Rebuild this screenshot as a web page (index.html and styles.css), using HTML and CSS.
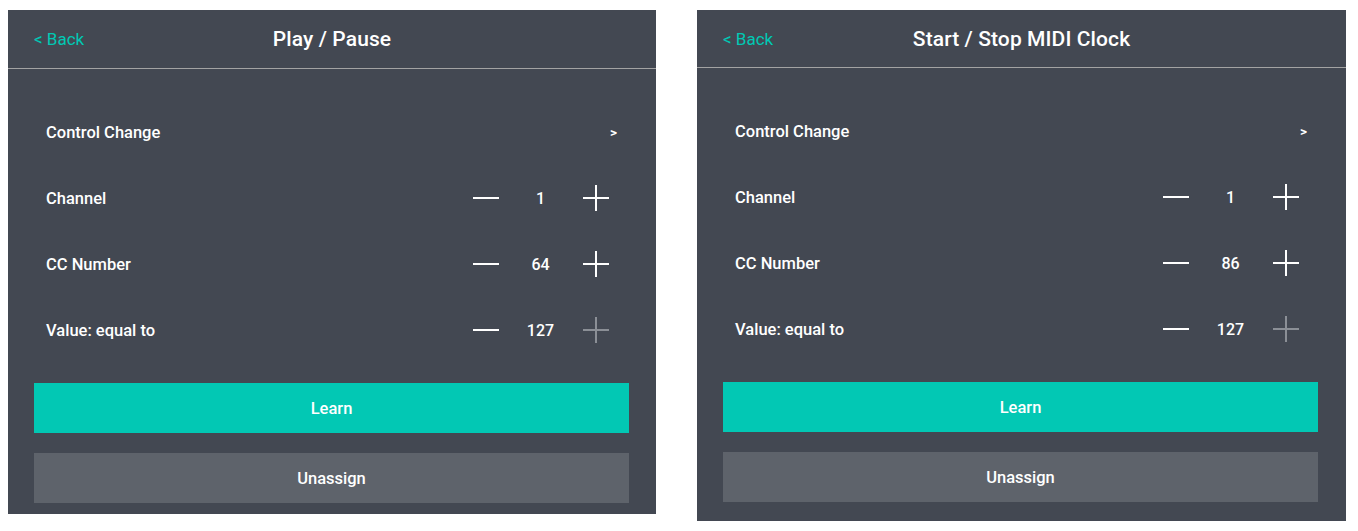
FILE: index.html
```html
<!DOCTYPE html>
<html>
<head>
<meta charset="utf-8">
<link rel="stylesheet" href="styles.css">
</head>
<body>
<div class="page">
  <section class="panel">
    <header class="header">
      <span class="back">&lt; Back</span>
      <h1 class="title">Play / Pause</h1>
    </header>
    <div class="rows">
      <div class="row"><span class="label">Control Change</span><span class="chev">&gt;</span></div>
      <div class="row"><span class="label">Channel</span>
        <div class="stepper">
          <svg class="btn" width="26" height="26" viewBox="0 0 26 26"><rect x="0" y="12" width="26" height="2" fill="#fff"/></svg>
          <span class="val">1</span>
          <svg class="btn" width="26" height="26" viewBox="0 0 26 26"><rect x="0" y="12" width="26" height="2" fill="#fff"/><rect x="12" y="0" width="2" height="26" fill="#fff"/></svg>
        </div>
      </div>
      <div class="row"><span class="label">CC Number</span>
        <div class="stepper">
          <svg class="btn" width="26" height="26" viewBox="0 0 26 26"><rect x="0" y="12" width="26" height="2" fill="#fff"/></svg>
          <span class="val">64</span>
          <svg class="btn" width="26" height="26" viewBox="0 0 26 26"><rect x="0" y="12" width="26" height="2" fill="#fff"/><rect x="12" y="0" width="2" height="26" fill="#fff"/></svg>
        </div>
      </div>
      <div class="row"><span class="label">Value: equal to</span>
        <div class="stepper">
          <svg class="btn" width="26" height="26" viewBox="0 0 26 26"><rect x="0" y="12" width="26" height="2" fill="#fff"/></svg>
          <span class="val">127</span>
          <svg class="btn" width="26" height="26" viewBox="0 0 26 26"><rect x="0" y="12" width="26" height="2" fill="#8b8f96"/><rect x="12" y="0" width="2" height="26" fill="#8b8f96"/></svg>
        </div>
      </div>
    </div>
    <div class="actions">
      <div class="button learn">Learn</div>
      <div class="button unassign">Unassign</div>
    </div>
  </section>

  <section class="panel panel-alt">
    <header class="header">
      <span class="back">&lt; Back</span>
      <h1 class="title">Start / Stop MIDI Clock</h1>
    </header>
    <div class="rows">
      <div class="row"><span class="label">Control Change</span><span class="chev">&gt;</span></div>
      <div class="row"><span class="label">Channel</span>
        <div class="stepper">
          <svg class="btn" width="26" height="26" viewBox="0 0 26 26"><rect x="0" y="12" width="26" height="2" fill="#fff"/></svg>
          <span class="val">1</span>
          <svg class="btn" width="26" height="26" viewBox="0 0 26 26"><rect x="0" y="12" width="26" height="2" fill="#fff"/><rect x="12" y="0" width="2" height="26" fill="#fff"/></svg>
        </div>
      </div>
      <div class="row"><span class="label">CC Number</span>
        <div class="stepper">
          <svg class="btn" width="26" height="26" viewBox="0 0 26 26"><rect x="0" y="12" width="26" height="2" fill="#fff"/></svg>
          <span class="val">86</span>
          <svg class="btn" width="26" height="26" viewBox="0 0 26 26"><rect x="0" y="12" width="26" height="2" fill="#fff"/><rect x="12" y="0" width="2" height="26" fill="#fff"/></svg>
        </div>
      </div>
      <div class="row"><span class="label">Value: equal to</span>
        <div class="stepper">
          <svg class="btn" width="26" height="26" viewBox="0 0 26 26"><rect x="0" y="12" width="26" height="2" fill="#fff"/></svg>
          <span class="val">127</span>
          <svg class="btn" width="26" height="26" viewBox="0 0 26 26"><rect x="0" y="12" width="26" height="2" fill="#8b8f96"/><rect x="12" y="0" width="2" height="26" fill="#8b8f96"/></svg>
        </div>
      </div>
    </div>
    <div class="actions">
      <div class="button learn">Learn</div>
      <div class="button unassign">Unassign</div>
    </div>
  </section>
</div>
</body>
</html>
```

FILE: styles.css
```css
* { box-sizing: border-box; }
html, body { margin: 0; padding: 0; background: #fff; }
body { font-family: Roboto, "Liberation Sans", sans-serif; color: #fff; }

.page {
  display: flex;
  align-items: flex-start;
  gap: 41px;
  padding: 10px 0 0 8px;
}

.panel {
  width: 648px;
  background: #434852;
  display: flex;
  flex-direction: column;
  padding-bottom: 11px;
}
.panel-alt { width: 649px; padding-bottom: 19px; }

.header {
  height: 59px;
  border-bottom: 1px solid #a3a3a3;
  display: flex;
  align-items: center;
  justify-content: center;
  position: relative;
}
.panel-alt .header { height: 58px; }

.back {
  position: absolute;
  left: 26px;
  top: 50%;
  transform: translateY(-50%);
  color: #00c8b4;
  font-size: 17px;
  font-weight: 400;
}

.title {
  margin: 0;
  font-size: 21px;
  font-weight: 500;
  letter-spacing: 0.1px;
}

.rows {
  display: flex;
  flex-direction: column;
  padding: 30px 38px 0 38px;
}

.row {
  height: 66px;
  display: flex;
  align-items: center;
  justify-content: space-between;
}

.label { font-size: 16.5px; font-weight: 500; }

.chev {
  font-size: 13.5px;
  font-weight: 700;
  margin-right: 1px;
}

.stepper {
  display: flex;
  align-items: center;
  margin-right: 9px;
}
.btn { display: block; }
.val {
  width: 84px;
  text-align: center;
  font-size: 16px;
  font-weight: 500;
  padding-right: 1px;
}

.actions {
  display: flex;
  flex-direction: column;
  gap: 20px;
  padding: 20px 0 0 26px;
}

.button {
  width: 595px;
  height: 50px;
  display: flex;
  align-items: center;
  justify-content: center;
  font-size: 16.5px;
  font-weight: 500;
}
.learn { background: #02c8b4; }
.unassign { background: #5e636b; }
```
